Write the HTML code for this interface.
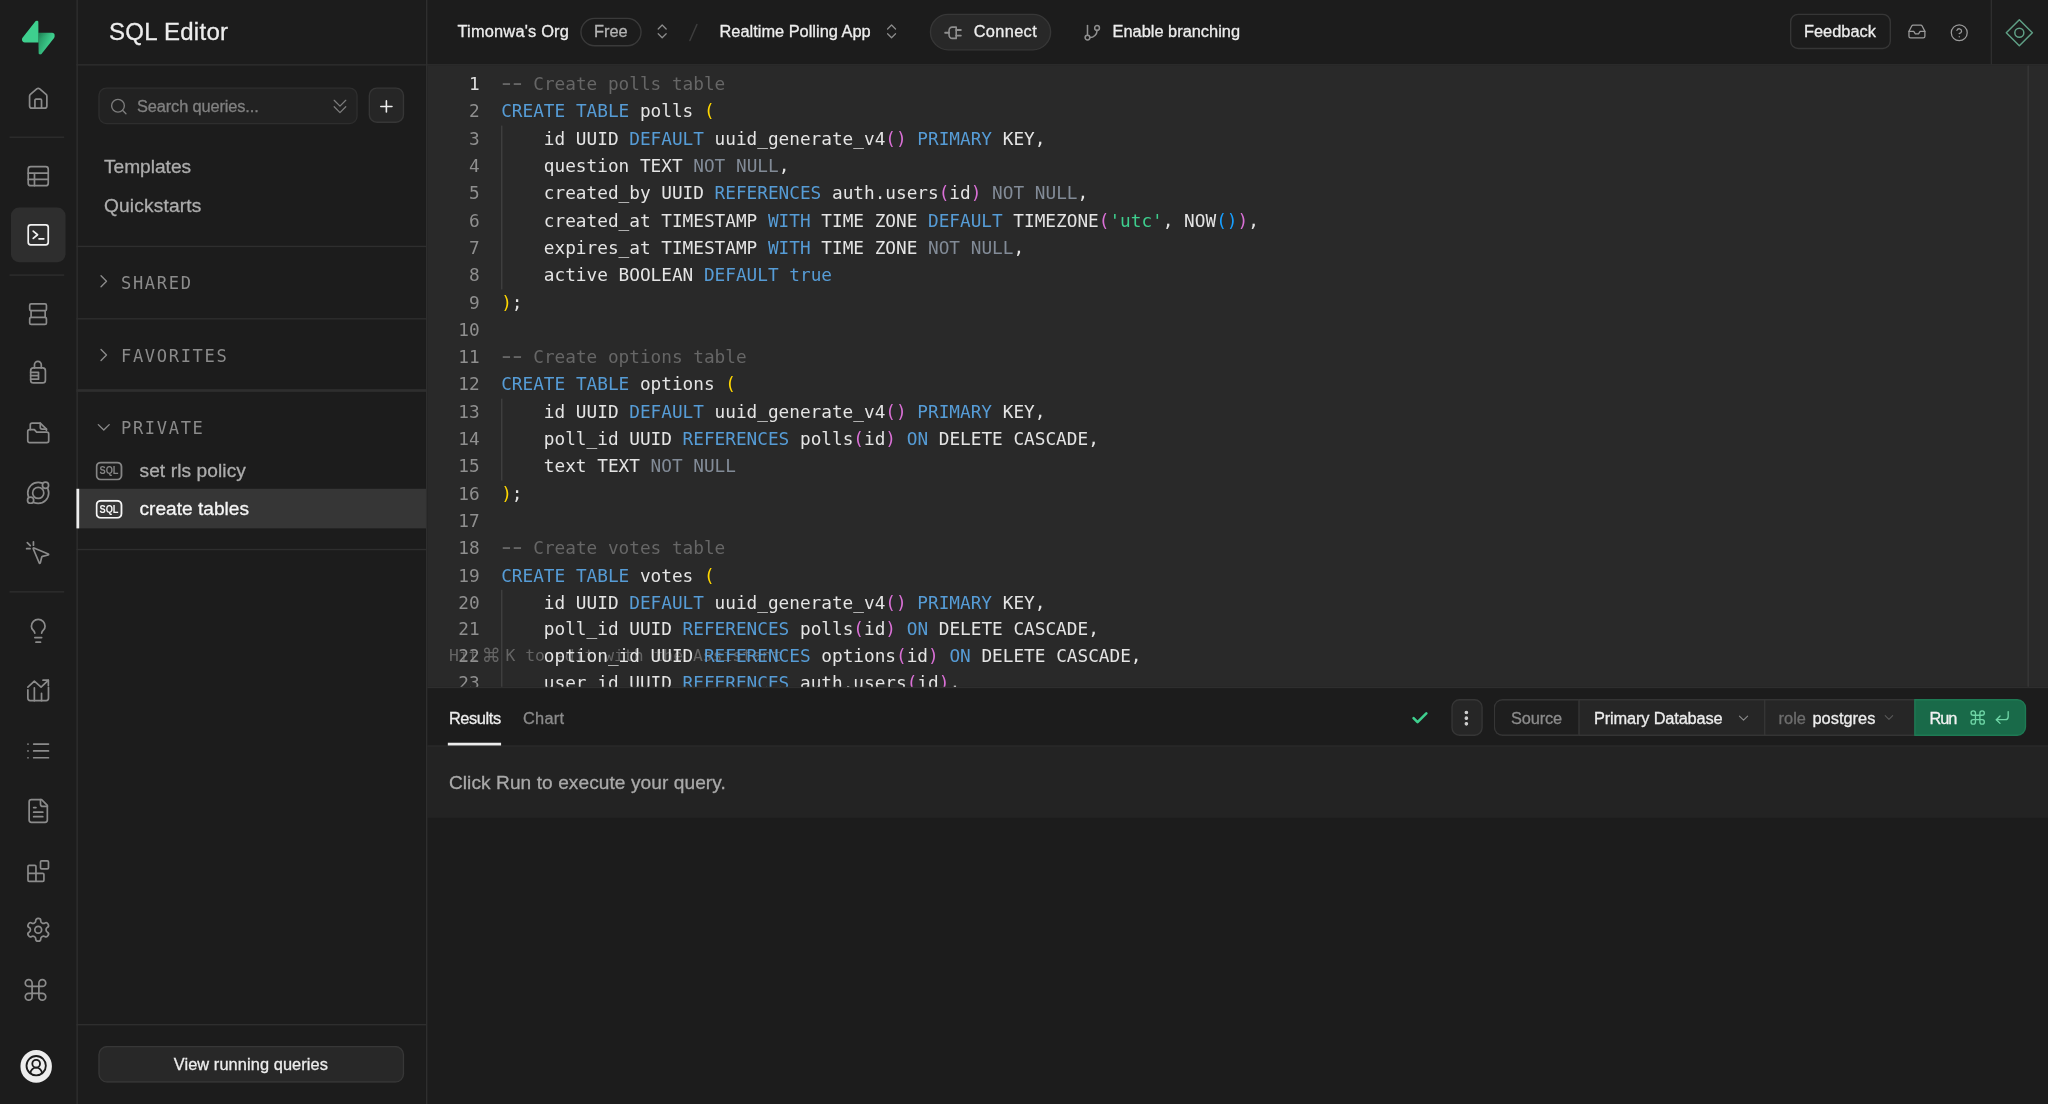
<!DOCTYPE html>
<html lang="en"><head><meta charset="utf-8"><title>SQL Editor | Supabase</title>
<style>
html,body{margin:0;padding:0;background:#1c1c1c;overflow:hidden;width:2048px;height:1104px}
#app{position:absolute;left:0;top:0;width:1500px;height:808.6px;transform:scale(1.3653333);transform-origin:0 0;font-family:"Liberation Sans",sans-serif;color:#ededed;font-size:14px;overflow:hidden;will-change:transform}
.a{position:absolute;box-sizing:border-box}
.t{position:absolute;white-space:pre;line-height:20px;height:20px;-webkit-text-stroke:0.22px currentColor}
.mono{font-family:"DejaVu Sans Mono","Liberation Mono",monospace;-webkit-text-stroke:0 !important}
.code{position:absolute;white-space:pre;font-family:"DejaVu Sans Mono","Liberation Mono",monospace;font-size:13px;line-height:20px;height:20px;color:#e4e4e4;letter-spacing:-0.012px}
.ln{position:absolute;white-space:pre;font-family:"DejaVu Sans Mono","Liberation Mono",monospace;font-size:13px;line-height:20px;height:20px;text-align:right;color:#8f8f8f}
.k{color:#569cd6}.c{color:#666}.o{color:#828b97}.s{color:#3ecf8e}.b1{color:#ffd700}.b2{color:#da70d6}.b3{color:#179fff}
.hy{display:inline-block;transform:translateY(-1.1px) scale(1.62,1.3)}
.cmdk{display:inline-block;width:7.22px;font-family:"DejaVu Sans",sans-serif;font-size:14px;text-indent:-4.8px;margin-right:-1.9px;line-height:1;position:relative;top:1.1px}

</style></head><body>
<div id="app">
<div class="a " style="left:312.598px;top:47.974px;width:1187.402px;height:455.640px;background:#292929"></div>
<div class="a " style="left:312.598px;top:503.394px;width:1187.402px;height:43.726px;background:#1c1c1c;border-top:1px solid #2e2e2e;border-bottom:1px solid #2e2e2e"></div>
<div class="a " style="left:312.598px;top:547.119px;width:1187.402px;height:51.709px;background:#232323"></div>
<div class="a " style="left:55.664px;top:46.875px;width:1444.336px;height:1.025px;background:#2e2e2e"></div>
<div class="a " style="left:55.664px;top:0.000px;width:1.025px;height:808.594px;background:#2e2e2e"></div>
<div class="a " style="left:311.572px;top:0.000px;width:1.099px;height:808.594px;background:#2e2e2e"></div>
<div class="a " style="left:1458.252px;top:0.000px;width:1.025px;height:46.875px;background:#2e2e2e"></div>
<div class="a " style="left:1485.352px;top:47.974px;width:0.879px;height:455.420px;background:#383838"></div>
<svg class="a" style="left:15.894px;top:14.795px" width="24.39" height="25.27" viewBox="0 0 109 113" fill="none"><defs><linearGradient id="lg0" x1="53.9738" y1="54.974" x2="94.1635" y2="71.8295" gradientUnits="userSpaceOnUse"><stop stop-color="#249361"/><stop offset="1" stop-color="#3ECF8E"/></linearGradient><linearGradient id="lg1" x1="36.1558" y1="30.578" x2="54.4844" y2="65.0806" gradientUnits="userSpaceOnUse"><stop/><stop offset="1" stop-opacity="0"/></linearGradient></defs><path d="M63.7076 110.284C60.8481 113.885 55.0502 111.912 54.9813 107.314L53.9738 40.0627L99.1935 40.0627C107.384 40.0627 111.952 49.5228 106.859 55.9374L63.7076 110.284Z" fill="url(#lg0)"/><path d="M63.7076 110.284C60.8481 113.885 55.0502 111.912 54.9813 107.314L53.9738 40.0627L99.1935 40.0627C107.384 40.0627 111.952 49.5228 106.859 55.9374L63.7076 110.284Z" fill="url(#lg1)" fill-opacity="0.2"/><path d="M45.317 2.07103C48.1765 -1.53037 53.9745 0.442937 54.0434 5.041L54.4849 72.2922H9.83113C1.64038 72.2922 -2.92775 62.8321 2.1655 56.4175L45.317 2.07103Z" fill="#3ECF8E"/></svg>
<div class="a " style="left:7.690px;top:152.344px;width:39.917px;height:39.990px;background:#2e2e2e;border-radius:6px"></div>
<svg class="a" style="left:18.125px;top:61.997px;" width="20" height="20" viewBox="0 0 24 24" fill="none" stroke="#8b8b8b" stroke-width="1.5" stroke-linecap="round" stroke-linejoin="round"><path d="M4.4 10.1a2 2 0 0 1 .7-1.5l5.6-4.8a2 2 0 0 1 2.6 0l5.6 4.8a2 2 0 0 1 .7 1.5v8.6a2 2 0 0 1-2 2H6.4a2 2 0 0 1-2-2z"/><path d="M9.1 20.7v-7a.9.9 0 0 1 .9-.9h4a.9.9 0 0 1 .9.9v7"/></svg>
<svg class="a" style="left:17.832px;top:118.906px;" width="20" height="20" viewBox="0 0 24 24" fill="none" stroke="#8b8b8b" stroke-width="1.5" stroke-linecap="round" stroke-linejoin="round"><rect x="3.2" y="3.65" width="17.6" height="16.7" rx="2.2"/><path d="M3.2 9.4h17.6M3.2 14.9h17.6M8.7 9.4v10.9"/></svg>
<svg class="a" style="left:17.832px;top:162.119px;" width="20" height="20" viewBox="0 0 24 24" fill="none" stroke="#f2f2f2" stroke-width="1.5" stroke-linecap="round" stroke-linejoin="round"><rect x="3.2" y="3.2" width="17.6" height="17.6" rx="2.2"/><path d="M7.6 8.7l3.8 3.2-3.8 3.2M12.7 15.5h4.2"/></svg>
<svg class="a" style="left:17.832px;top:219.980px;" width="20" height="20" viewBox="0 0 24 24" fill="none" stroke="#8b8b8b" stroke-width="1.5" stroke-linecap="round" stroke-linejoin="round"><rect x="4.5" y="3.1" width="14.7" height="6" rx="1.3"/><rect x="4.5" y="14.9" width="14.7" height="6.2" rx="1.3"/><path d="M5.7 9.1v5.8M18.1 9.1v5.8"/></svg>
<svg class="a" style="left:17.832px;top:263.193px;" width="20" height="20" viewBox="0 0 24 24" fill="none" stroke="#8b8b8b" stroke-width="1.5" stroke-linecap="round" stroke-linejoin="round"><path d="M8.7 7.75V5a3 3 0 0 1 6 0v2.75"/><rect x="5.35" y="7.75" width="12.95" height="13.2" rx="2.4"/><path d="M5.35 11.6h6.9v6.1H5.35M5.35 14.6h6.9"/></svg>
<svg class="a" style="left:17.832px;top:307.139px;" width="20" height="20" viewBox="0 0 24 24" fill="none" stroke="#8b8b8b" stroke-width="1.5" stroke-linecap="round" stroke-linejoin="round"><path d="M5 9.2V5a1.6 1.6 0 0 1 1.6-1.6h7.2l5.4 5.4v1"/><path d="M13.8 3.4v3.8a1.6 1.6 0 0 0 1.6 1.6h3.8"/><path d="M2.8 10.8a1.6 1.6 0 0 1 1.6-1.6h4.2l2 2.2h9a1.6 1.6 0 0 1 1.6 1.6v6a1.6 1.6 0 0 1-1.6 1.6H4.4a1.6 1.6 0 0 1-1.6-1.6z"/></svg>
<svg class="a" style="left:17.832px;top:351.084px;" width="20" height="20" viewBox="0 0 24 24" fill="none" stroke="#8b8b8b" stroke-width="1.5" stroke-linecap="round" stroke-linejoin="round"><circle cx="12" cy="12" r="9.2"/><circle cx="12" cy="12" r="4.9"/><circle cx="18.4" cy="5.3" r="2.7" fill="#1c1c1c"/><circle cx="5.3" cy="18.4" r="2.7" fill="#1c1c1c"/></svg>
<svg class="a" style="left:17.832px;top:395.029px;" width="20" height="20" viewBox="0 0 24 24" fill="none" stroke="#8b8b8b" stroke-width="1.5" stroke-linecap="round" stroke-linejoin="round"><path d="M2.4 3l2.6 2.6M7.8 2.2v3M1.8 8.2h3"/><path d="M7.6 8.3a.5.5 0 0 1 .65-.65l12.6 5.2a.5.5 0 0 1-.07.95l-5 1.2a1 1 0 0 0-.74.74l-1.2 5a.5.5 0 0 1-.95.07z"/></svg>
<svg class="a" style="left:17.832px;top:452.158px;" width="20" height="20" viewBox="0 0 24 24" fill="none" stroke="#8b8b8b" stroke-width="1.5" stroke-linecap="round" stroke-linejoin="round"><path d="M15 14c.2-1 .7-1.7 1.5-2.5 1-.9 1.5-2.2 1.5-3.5A6 6 0 0 0 6 8c0 1 .2 2.2 1.5 3.5.7.7 1.3 1.5 1.5 2.5"/><path d="M9 18h6"/><path d="M10 22h4"/></svg>
<svg class="a" style="left:17.832px;top:496.104px;" width="20" height="20" viewBox="0 0 24 24" fill="none" stroke="#8b8b8b" stroke-width="1.5" stroke-linecap="round" stroke-linejoin="round"><path d="M2.9 8.7 8.6 3.4l5.9 5.3 6.3-6"/><path d="M16.2 2.6h4.7v4.7"/><path d="M2.9 11.2v7.4a2 2 0 0 0 2 2h14.1a2 2 0 0 0 2-2V9"/><path d="M8.6 9.3v11.3M14.9 14.2v6.4"/></svg>
<svg class="a" style="left:17.832px;top:540.049px;" width="20" height="20" viewBox="0 0 24 24" fill="none" stroke="#8b8b8b" stroke-width="1.5" stroke-linecap="round" stroke-linejoin="round"><path d="M3 6h.01M3 12h.01M3 18h.01M8 6h13M8 12h13M8 18h13"/></svg>
<svg class="a" style="left:17.832px;top:583.994px;" width="20" height="20" viewBox="0 0 24 24" fill="none" stroke="#8b8b8b" stroke-width="1.5" stroke-linecap="round" stroke-linejoin="round"><path d="M15 2H6a2 2 0 0 0-2 2v16a2 2 0 0 0 2 2h12a2 2 0 0 0 2-2V7Z"/><path d="M14 2v4a2 2 0 0 0 2 2h4"/><path d="M10 9H8"/><path d="M16 13H8"/><path d="M16 17H8"/></svg>
<svg class="a" style="left:17.832px;top:627.939px;" width="20" height="20" viewBox="0 0 24 24" fill="none" stroke="#8b8b8b" stroke-width="1.5" stroke-linecap="round" stroke-linejoin="round"><rect width="7" height="7" x="14" y="3" rx="1"/><path d="M10 21V8a1 1 0 0 0-1-1H4a1 1 0 0 0-1 1v12a1 1 0 0 0 1 1h12a1 1 0 0 0 1-1v-5a1 1 0 0 0-1-1H3"/></svg>
<svg class="a" style="left:17.832px;top:671.152px;" width="20" height="20" viewBox="0 0 24 24" fill="none" stroke="#8b8b8b" stroke-width="1.5" stroke-linecap="round" stroke-linejoin="round"><path d="M12.22 2h-.44a2 2 0 0 0-2 2v.18a2 2 0 0 1-1 1.73l-.43.25a2 2 0 0 1-2 0l-.15-.08a2 2 0 0 0-2.73.73l-.22.38a2 2 0 0 0 .73 2.73l.15.1a2 2 0 0 1 1 1.72v.51a2 2 0 0 1-1 1.74l-.15.09a2 2 0 0 0-.73 2.73l.22.38a2 2 0 0 0 2.73.73l.15-.08a2 2 0 0 1 2 0l.43.25a2 2 0 0 1 1 1.73V20a2 2 0 0 0 2 2h.44a2 2 0 0 0 2-2v-.18a2 2 0 0 1 1-1.73l.43-.25a2 2 0 0 1 2 0l.15.08a2 2 0 0 0 2.73-.73l.22-.39a2 2 0 0 0-.73-2.73l-.15-.08a2 2 0 0 1-1-1.74v-.5a2 2 0 0 1 1-1.74l.15-.09a2 2 0 0 0 .73-2.73l-.22-.38a2 2 0 0 0-2.73-.73l-.15.08a2 2 0 0 1-2 0l-.43-.25a2 2 0 0 1-1-1.73V4a2 2 0 0 0-2-2z"/><circle cx="12" cy="12" r="3"/></svg>
<svg class="a" style="left:16.367px;top:715.098px;" width="20" height="20" viewBox="0 0 24 24" fill="none" stroke="#8b8b8b" stroke-width="1.5" stroke-linecap="round" stroke-linejoin="round"><path d="M15 6v12a3 3 0 1 0 3-3H6a3 3 0 1 0 3 3V6a3 3 0 1 0-3 3h12a3 3 0 1 0-3-3"/></svg>
<div class="a " style="left:7.324px;top:99.829px;width:39.917px;height:1.025px;background:#2e2e2e"></div>
<div class="a " style="left:7.324px;top:200.537px;width:39.917px;height:1.025px;background:#2e2e2e"></div>
<div class="a " style="left:7.324px;top:433.081px;width:39.917px;height:1.025px;background:#2e2e2e"></div>
<div class="a " style="left:14.575px;top:768.530px;width:23.657px;height:24.170px;background:#ededed;border-radius:50%"></div>
<svg class="a" style="left:17.904px;top:772.262px;" width="17" height="17" viewBox="0 0 24 24" fill="none" stroke="#1c1c1c" stroke-width="1.9" stroke-linecap="round" stroke-linejoin="round"><path d="M18 20a6 6 0 0 0-12 0"/><circle cx="12" cy="10" r="4"/><circle cx="12" cy="12" r="10"/></svg>
<div class="t " style="left:79.834px;top:13.071px;font-size:17.6px;color:#ededed;letter-spacing:0.2px">SQL Editor</div>
<div class="a " style="left:72.144px;top:63.721px;width:189.697px;height:27.686px;background:#222222;border:1px solid #2e2e2e;border-radius:6px"></div>
<svg class="a" style="left:79.792px;top:71.369px;" width="14" height="14" viewBox="0 0 24 24" fill="none" stroke="#7c7c7c" stroke-width="1.7" stroke-linecap="round" stroke-linejoin="round"><circle cx="11" cy="11" r="8"/><path d="m21 21-4.3-4.3"/></svg>
<div class="t " style="left:100.342px;top:68.003px;font-size:12px;color:#818181;letter-spacing:-0.095px">Search queries...</div>
<svg class="a" style="left:240.877px;top:69.783px;" width="16" height="16" viewBox="0 0 24 24" fill="none" stroke="#7c7c7c" stroke-width="1.4" stroke-linecap="round" stroke-linejoin="round"><path d="m5.65 5.2 6.35 6.4 6.35-6.4"/><path d="m5.65 12.3 6.35 6.4 6.35-6.4"/></svg>
<div class="a " style="left:269.678px;top:64.380px;width:26.001px;height:26.001px;background:#262626;border:1px solid #363636;border-radius:6px"></div>
<svg class="a" style="left:275.568px;top:70.637px;" width="14" height="14" viewBox="0 0 24 24" fill="none" stroke="#ededed" stroke-width="2" stroke-linecap="round" stroke-linejoin="round"><path d="M5 12h14"/><path d="M12 5v14"/></svg>
<div class="t " style="left:76.172px;top:112.168px;font-size:14px;color:#adadad;">Templates</div>
<div class="t " style="left:76.172px;top:139.561px;font-size:14px;color:#adadad;letter-spacing:0.127px">Quickstarts</div>
<div class="a " style="left:56.177px;top:179.810px;width:255.469px;height:1.025px;background:#2e2e2e"></div>
<svg class="a" style="left:67.659px;top:198.433px;" width="16" height="16" viewBox="0 0 24 24" fill="none" stroke="#8b8b8b" stroke-width="1.5" stroke-linecap="round" stroke-linejoin="round"><path d="m9 18 6-6-6-6"/></svg>
<div class="t mono" style="left:88.623px;top:198.118px;font-size:12.5px;color:#8b8b8b;letter-spacing:1.215px">SHARED</div>
<div class="a " style="left:56.177px;top:232.617px;width:255.469px;height:1.025px;background:#2e2e2e"></div>
<svg class="a" style="left:67.732px;top:251.717px;" width="16" height="16" viewBox="0 0 24 24" fill="none" stroke="#8b8b8b" stroke-width="1.5" stroke-linecap="round" stroke-linejoin="round"><path d="m9 18 6-6-6-6"/></svg>
<div class="t mono" style="left:88.623px;top:250.889px;font-size:12.5px;color:#8b8b8b;letter-spacing:1.215px">FAVORITES</div>
<div class="a " style="left:56.177px;top:285.498px;width:255.469px;height:1.025px;background:#2e2e2e"></div>
<svg class="a" style="left:67.549px;top:304.524px;" width="16" height="16" viewBox="0 0 24 24" fill="none" stroke="#8b8b8b" stroke-width="1.5" stroke-linecap="round" stroke-linejoin="round"><path d="m6 9 6 6 6-6"/></svg>
<div class="t mono" style="left:88.623px;top:303.550px;font-size:12.5px;color:#8b8b8b;letter-spacing:1.215px">PRIVATE</div>
<svg class="a" style="left:70.277px;top:338.190px" width="19.7" height="14" viewBox="0 0 19.7 14" fill="none"><rect x="0.7" y="0.7" width="18.3" height="12.6" rx="3.2" stroke="#858585" stroke-width="1.4"/><text x="2.85" y="9.5" font-family="Liberation Sans, sans-serif" font-weight="700" font-size="8.5" fill="#858585" textLength="14" lengthAdjust="spacingAndGlyphs">SQL</text></svg>
<div class="t " style="left:102.173px;top:333.726px;font-size:14px;color:#adadad;letter-spacing:0.068px">set rls policy</div>
<div class="a " style="left:56.177px;top:358.154px;width:255.469px;height:28.564px;background:#363636"></div>
<div class="a " style="left:56.177px;top:358.154px;width:1.978px;height:28.564px;background:#ededed"></div>
<svg class="a" style="left:70.277px;top:366.022px" width="19.7" height="14" viewBox="0 0 19.7 14" fill="none"><rect x="0.7" y="0.7" width="18.3" height="12.6" rx="3.2" stroke="#f5f5f5" stroke-width="1.4"/><text x="2.85" y="9.5" font-family="Liberation Sans, sans-serif" font-weight="700" font-size="8.5" fill="#f5f5f5" textLength="14" lengthAdjust="spacingAndGlyphs">SQL</text></svg>
<div class="t " style="left:102.173px;top:362.070px;font-size:14px;color:#f5f5f5;">create tables</div>
<div class="a " style="left:56.177px;top:401.807px;width:255.469px;height:1.025px;background:#2e2e2e"></div>
<div class="a " style="left:56.177px;top:750.439px;width:255.469px;height:1.025px;background:#2e2e2e"></div>
<div class="a " style="left:71.924px;top:766.479px;width:223.755px;height:26.074px;background:#282828;border:1px solid #373737;border-radius:6.5px"></div>
<div class="t " style="left:127.222px;top:769.810px;font-size:12px;color:#ededed;letter-spacing:0.06px">View running queries</div>
<div class="t " style="left:335.083px;top:13.071px;font-size:12px;color:#ededed;letter-spacing:0.14px">Timonwa's Org</div>
<div class="a " style="left:424.805px;top:13.184px;width:44.897px;height:20.947px;border:1px solid #3a3a3a;border-radius:999px"></div>
<div class="t " style="left:435.059px;top:13.071px;font-size:12px;color:#b4b4b4;">Free</div>
<svg class="a" style="left:477.717px;top:15.998px;" width="14" height="14" viewBox="0 0 24 24" fill="none" stroke="#8b8b8b" stroke-width="1.6" stroke-linecap="round" stroke-linejoin="round"><path d="m7 15 5 5 5-5"/><path d="m7 9 5-5 5 5"/></svg>
<svg class="a" style="left:501.709px;top:14.648px" width="11.72" height="17.58" viewBox="0 0 16 24" fill="none" stroke="#3d3d3d" stroke-width="1.5" stroke-linecap="round"><path d="M11.5 4 4.5 20"/></svg>
<div class="t " style="left:526.978px;top:13.071px;font-size:12px;color:#ededed;">Realtime Polling App</div>
<svg class="a" style="left:646.101px;top:15.998px;" width="14" height="14" viewBox="0 0 24 24" fill="none" stroke="#8b8b8b" stroke-width="1.6" stroke-linecap="round" stroke-linejoin="round"><path d="m7 15 5 5 5-5"/><path d="m7 9 5-5 5 5"/></svg>
<div class="a " style="left:680.566px;top:10.181px;width:89.429px;height:26.514px;background:#282828;border:1px solid #373737;border-radius:999px"></div>
<svg class="a" style="left:691.364px;top:16.730px;" width="14" height="14" viewBox="0 0 24 24" fill="none" stroke="#8f8f8f" stroke-width="2" stroke-linecap="round" stroke-linejoin="round"><g transform="translate(12 12) scale(1 1.18) rotate(90) translate(-12 -12)"><path d="M12 22v-5"/><path d="M9 8V2"/><path d="M15 8V2"/><path d="M18 8v5a4 4 0 0 1-4 4h-4a4 4 0 0 1-4-4V8Z"/></g></svg>
<div class="t " style="left:713.159px;top:13.071px;font-size:12px;color:#ededed;letter-spacing:0.24px">Connect</div>
<svg class="a" style="left:792.805px;top:16.804px;" width="14" height="14" viewBox="0 0 24 24" fill="none" stroke="#8f8f8f" stroke-width="1.9" stroke-linecap="round" stroke-linejoin="round"><line x1="6" x2="6" y1="3" y2="15"/><circle cx="18" cy="6" r="3"/><circle cx="6" cy="18" r="3"/><path d="M18 9a9 9 0 0 1-9 9"/></svg>
<div class="t " style="left:814.819px;top:13.071px;font-size:12px;color:#ededed;">Enable branching</div>
<div class="a " style="left:1310.522px;top:10.400px;width:74.194px;height:26.001px;border:1px solid #363636;border-radius:6px"></div>
<div class="t " style="left:1321.289px;top:13.071px;font-size:12px;color:#ededed;">Feedback</div>
<svg class="a" style="left:1396.833px;top:16.438px;" width="14" height="14" viewBox="0 0 24 24" fill="none" stroke="#9a9a9a" stroke-width="1.6" stroke-linecap="round" stroke-linejoin="round"><polyline points="22 12 16 12 14 15 10 15 8 12 2 12"/><path d="M5.45 5.11 2 12v6a2 2 0 0 0 2 2h16a2 2 0 0 0 2-2v-6l-3.45-6.89A2 2 0 0 0 16.76 4H7.24a2 2 0 0 0-1.79 1.11z"/></svg>
<svg class="a" style="left:1427.814px;top:16.584px;" width="14" height="14" viewBox="0 0 24 24" fill="none" stroke="#9a9a9a" stroke-width="1.6" stroke-linecap="round" stroke-linejoin="round"><circle cx="12" cy="12" r="10"/><path d="M9.09 9a3 3 0 0 1 5.83 1c0 2-3 3-3 3"/><path d="M12 17h.01"/></svg>
<svg class="a" style="left:1468.492px;top:12.657px;" width="22" height="22" viewBox="0 0 24 24" fill="none" stroke="#5f9f85" stroke-width="1.2" stroke-linecap="round" stroke-linejoin="round"><path d="M12 1.6 22.4 12 12 22.4 1.6 12z"/><circle cx="12" cy="12" r="3.6"/></svg>
<div class="a" style="left:0;top:47.974px;width:1500px;height:455.420px;overflow:hidden"><div class="a" style="left:0;top:-47.974px;width:1500px;height:809px"><div class="t mono" style="left:328.784px;top:469.590px;font-size:12px;color:#646464;-webkit-text-stroke:0">Hit <span class="cmdk">⌘</span> K to edit with the Assistant</div><div class="ln" style="left:312.012px;width:39.258px;top:51.929px;color:#e0e0e0;">1</div><div class="code" style="left:367.090px;top:51.929px"><span class="c"><span class="hy">-</span><span class="hy">-</span> Create polls table</span></div><div class="ln" style="left:312.012px;width:39.258px;top:71.906px;">2</div><div class="code" style="left:367.090px;top:71.906px"><span class="k">CREATE</span> <span class="k">TABLE</span> polls <span class="b1">(</span></div><div class="ln" style="left:312.012px;width:39.258px;top:91.884px;">3</div><div class="code" style="left:367.090px;top:91.884px">    id UUID <span class="k">DEFAULT</span> uuid_generate_v4<span class="b2">()</span> <span class="k">PRIMARY</span> KEY,</div><div class="ln" style="left:312.012px;width:39.258px;top:111.861px;">4</div><div class="code" style="left:367.090px;top:111.861px">    question TEXT <span class="o">NOT</span> <span class="o">NULL</span>,</div><div class="ln" style="left:312.012px;width:39.258px;top:131.839px;">5</div><div class="code" style="left:367.090px;top:131.839px">    created_by UUID <span class="k">REFERENCES</span> auth.users<span class="b2">(</span>id<span class="b2">)</span> <span class="o">NOT</span> <span class="o">NULL</span>,</div><div class="ln" style="left:312.012px;width:39.258px;top:151.816px;">6</div><div class="code" style="left:367.090px;top:151.816px">    created_at TIMESTAMP <span class="k">WITH</span> TIME ZONE <span class="k">DEFAULT</span> TIMEZONE<span class="b2">(</span><span class="s">'utc'</span>, NOW<span class="b3">()</span><span class="b2">)</span>,</div><div class="ln" style="left:312.012px;width:39.258px;top:171.794px;">7</div><div class="code" style="left:367.090px;top:171.794px">    expires_at TIMESTAMP <span class="k">WITH</span> TIME ZONE <span class="o">NOT</span> <span class="o">NULL</span>,</div><div class="ln" style="left:312.012px;width:39.258px;top:191.771px;">8</div><div class="code" style="left:367.090px;top:191.771px">    active BOOLEAN <span class="k">DEFAULT</span> <span class="k">true</span></div><div class="ln" style="left:312.012px;width:39.258px;top:211.749px;">9</div><div class="code" style="left:367.090px;top:211.749px"><span class="b1">)</span>;</div><div class="ln" style="left:312.012px;width:39.258px;top:231.727px;">10</div><div class="code" style="left:367.090px;top:231.727px"></div><div class="ln" style="left:312.012px;width:39.258px;top:251.704px;">11</div><div class="code" style="left:367.090px;top:251.704px"><span class="c"><span class="hy">-</span><span class="hy">-</span> Create options table</span></div><div class="ln" style="left:312.012px;width:39.258px;top:271.682px;">12</div><div class="code" style="left:367.090px;top:271.682px"><span class="k">CREATE</span> <span class="k">TABLE</span> options <span class="b1">(</span></div><div class="ln" style="left:312.012px;width:39.258px;top:291.659px;">13</div><div class="code" style="left:367.090px;top:291.659px">    id UUID <span class="k">DEFAULT</span> uuid_generate_v4<span class="b2">()</span> <span class="k">PRIMARY</span> KEY,</div><div class="ln" style="left:312.012px;width:39.258px;top:311.637px;">14</div><div class="code" style="left:367.090px;top:311.637px">    poll_id UUID <span class="k">REFERENCES</span> polls<span class="b2">(</span>id<span class="b2">)</span> <span class="k">ON</span> DELETE CASCADE,</div><div class="ln" style="left:312.012px;width:39.258px;top:331.614px;">15</div><div class="code" style="left:367.090px;top:331.614px">    text TEXT <span class="o">NOT</span> <span class="o">NULL</span></div><div class="ln" style="left:312.012px;width:39.258px;top:351.592px;">16</div><div class="code" style="left:367.090px;top:351.592px"><span class="b1">)</span>;</div><div class="ln" style="left:312.012px;width:39.258px;top:371.569px;">17</div><div class="code" style="left:367.090px;top:371.569px"></div><div class="ln" style="left:312.012px;width:39.258px;top:391.547px;">18</div><div class="code" style="left:367.090px;top:391.547px"><span class="c"><span class="hy">-</span><span class="hy">-</span> Create votes table</span></div><div class="ln" style="left:312.012px;width:39.258px;top:411.524px;">19</div><div class="code" style="left:367.090px;top:411.524px"><span class="k">CREATE</span> <span class="k">TABLE</span> votes <span class="b1">(</span></div><div class="ln" style="left:312.012px;width:39.258px;top:431.502px;">20</div><div class="code" style="left:367.090px;top:431.502px">    id UUID <span class="k">DEFAULT</span> uuid_generate_v4<span class="b2">()</span> <span class="k">PRIMARY</span> KEY,</div><div class="ln" style="left:312.012px;width:39.258px;top:451.479px;">21</div><div class="code" style="left:367.090px;top:451.479px">    poll_id UUID <span class="k">REFERENCES</span> polls<span class="b2">(</span>id<span class="b2">)</span> <span class="k">ON</span> DELETE CASCADE,</div><div class="ln" style="left:312.012px;width:39.258px;top:471.457px;">22</div><div class="code" style="left:367.090px;top:471.457px">    option_id UUID <span class="k">REFERENCES</span> options<span class="b2">(</span>id<span class="b2">)</span> <span class="k">ON</span> DELETE CASCADE,</div><div class="ln" style="left:312.012px;width:39.258px;top:491.435px;">23</div><div class="code" style="left:367.090px;top:491.435px">    user_id UUID <span class="k">REFERENCES</span> auth.users<span class="b2">(</span>id<span class="b2">)</span>,</div><div class="a" style="left:367.456px;top:91.884px;width:1px;height:119.865px;background:#404040"></div><div class="a" style="left:367.456px;top:291.659px;width:1px;height:59.933px;background:#404040"></div><div class="a" style="left:367.456px;top:431.502px;width:1px;height:79.910px;background:#404040"></div></div></div>
<div class="t " style="left:328.784px;top:515.513px;font-size:12px;color:#ededed;letter-spacing:-0.29px">Results</div>
<div class="a " style="left:328.271px;top:544.189px;width:38.892px;height:2.197px;background:#ededed"></div>
<div class="t " style="left:383.057px;top:515.513px;font-size:12px;color:#8b8b8b;letter-spacing:0.19px">Chart</div>
<svg class="a" style="left:1033.039px;top:518.806px;" width="14" height="14" viewBox="0 0 24 24" fill="none" stroke="#3ecf8e" stroke-width="3.3" stroke-linecap="round" stroke-linejoin="round"><path d="M20 6 9 17l-5-5"/></svg>
<div class="a " style="left:1062.744px;top:512.402px;width:23.438px;height:26.147px;background:#262626;border:1px solid #363636;border-radius:6px"></div>
<svg class="a" style="left:1067.316px;top:518.952px;" width="14" height="14" viewBox="0 0 24 24" fill="none" stroke="#d0d0d0" stroke-width="1.4" stroke-linecap="round" stroke-linejoin="round"><circle cx="12" cy="4.9" r="1.6" fill="#d0d0d0"/><circle cx="12" cy="12" r="1.6" fill="#d0d0d0"/><circle cx="12" cy="19.1" r="1.6" fill="#d0d0d0"/></svg>
<div class="a " style="left:1093.872px;top:512.402px;width:62.402px;height:26.147px;background:#1e1e1e;border:1px solid #363636;border-right:none;border-radius:6.5px 0 0 6.5px"></div>
<div class="t " style="left:1106.689px;top:515.513px;font-size:12px;color:#8b8b8b;letter-spacing:-0.1px">Source</div>
<div class="a " style="left:1156.201px;top:512.402px;width:135.571px;height:26.147px;background:#262626;border:1px solid #363636;border-right:none"></div>
<div class="t " style="left:1167.480px;top:515.513px;font-size:12px;color:#ededed;letter-spacing:-0.12px">Primary Database</div>
<svg class="a" style="left:1271.124px;top:519.586px;" width="12" height="12" viewBox="0 0 24 24" fill="none" stroke="#8b8b8b" stroke-width="1.6" stroke-linecap="round" stroke-linejoin="round"><path d="m6 9 6 6 6-6"/></svg>
<div class="a " style="left:1291.699px;top:512.402px;width:111.621px;height:26.147px;background:#262626;border:1px solid #363636"></div>
<div class="t " style="left:1302.686px;top:515.513px;font-size:12px;color:#6e6e6e;">role</div>
<div class="t " style="left:1327.515px;top:515.513px;font-size:12px;color:#ededed;">postgres</div>
<svg class="a" style="left:1378.265px;top:520.086px;" width="11" height="11" viewBox="0 0 24 24" fill="none" stroke="#5a5a5a" stroke-width="1.6" stroke-linecap="round" stroke-linejoin="round"><path d="m6 9 6 6 6-6"/></svg>
<div class="a " style="left:1402.295px;top:512.402px;width:81.445px;height:26.147px;background:#196a49;border:1px solid #1e7a54;border-radius:0 6.5px 6.5px 0"></div>
<div class="t " style="left:1413.281px;top:515.513px;font-size:12px;color:#f2f2f2;letter-spacing:-0.85px">Run</div>
<svg class="a" style="left:1442.230px;top:519.086px;" width="13" height="13" viewBox="0 0 24 24" fill="none" stroke="#6fd6a6" stroke-width="1.8" stroke-linecap="round" stroke-linejoin="round"><path d="M15 6v12a3 3 0 1 0 3-3H6a3 3 0 1 0 3 3V6a3 3 0 1 0-3 3h12a3 3 0 1 0-3-3"/></svg>
<svg class="a" style="left:1460.028px;top:519.086px;" width="13" height="13" viewBox="0 0 24 24" fill="none" stroke="#6fd6a6" stroke-width="1.8" stroke-linecap="round" stroke-linejoin="round"><polyline points="9 10 4 15 9 20"/><path d="M20 4v7a4 4 0 0 1-4 4H4"/></svg>
<div class="t " style="left:328.784px;top:563.120px;font-size:14px;color:#a9a9a9;letter-spacing:0.05px">Click Run to execute your query.</div>
</div>
</body></html>
